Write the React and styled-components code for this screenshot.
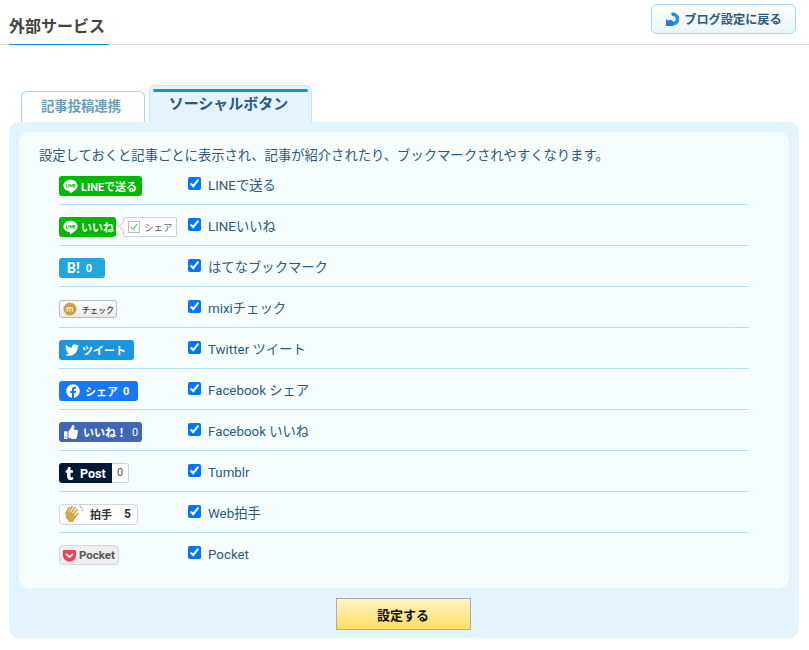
import React from "react";
import styled, { createGlobalStyle } from "styled-components";
import { FaTwitter, FaFacebook, FaThumbsUp, FaTumblr, FaGetPocket } from "react-icons/fa";
import { RiLineFill } from "react-icons/ri";

const FONT = `Roboto, "Noto Sans CJK JP", sans-serif`;

const GlobalStyle = createGlobalStyle`
  html, body {
    margin: 0;
    padding: 0;
    background: #fff;
    font-family: ${FONT};
  }
`;

const Page = styled.div`
  width: 809px;
  height: 650px;
  overflow: hidden;
`;

const Header = styled.header`
  height: 45px;
  box-sizing: border-box;
  padding: 4px 13px 0 9px;
  border-bottom: 1px solid #dcdfe2;
  display: flex;
  justify-content: space-between;
  align-items: flex-start;
`;

const Title = styled.h1`
  margin: 0;
  width: 100px;
  height: 41px;
  box-sizing: border-box;
  padding-top: 11px;
  border-bottom: 1px solid #1a8fd1;
  font-size: 16px;
  line-height: 24px;
  font-weight: 700;
  color: #444;
  white-space: nowrap;
`;

const BackButton = styled.button`
  width: 145px;
  height: 30px;
  box-sizing: border-box;
  padding: 0;
  display: flex;
  align-items: center;
  justify-content: center;
  gap: 3px;
  border: 1px solid #a8d4ec;
  border-radius: 6px;
  background: linear-gradient(#fff, #e8f6ff);
  color: #2c5a7c;
  font-family: ${FONT};
  font-size: 12.2px;
  font-weight: 700;
`;

const Tabs = styled.div`
  display: flex;
  align-items: flex-end;
  gap: 4px;
  height: 77px;
  padding-left: 21px;
`;

const Tab = styled.div`
  box-sizing: border-box;
  width: ${(p) => (p.$active ? "163px" : "124px")};
  height: ${(p) => (p.$active ? "37px" : "31px")};
  padding: ${(p) => (p.$active ? "4px" : "5px")} 4px 0 0;
  border: 1px solid ${(p) => (p.$active ? "#c5e5f7" : "#a8d4ec")};
  border-bottom: none;
  border-radius: 6px 6px 0 0;
  background: ${(p) => (p.$active ? "#e3f4ff" : "#fff")};
  color: ${(p) => (p.$active ? "#2c5a7c" : "#6d9ab8")};
  font-size: ${(p) => (p.$active ? "15px" : "13.33px")};
  line-height: ${(p) => (p.$active ? "21px" : "20px")};
  font-weight: 700;
  text-align: center;
  &::before {
    content: "";
    display: ${(p) => (p.$active ? "block" : "none")};
    height: 3px;
    margin: -1px -1px 2px 3px;
    border-radius: 2px;
    background: #1a8fd1;
  }
`;

const Panel = styled.section`
  margin: 0 10px 0 9px;
  height: 516px;
  box-sizing: border-box;
  padding: 10px;
  border-radius: 10px;
  background: #e3f4ff;
`;

const Inner = styled.div`
  height: 456px;
  box-sizing: border-box;
  padding: 15px 40px 0 20px;
  border-radius: 10px;
  background: #f6fdff;
  color: #2c5a7c;
`;

const Lead = styled.p`
  margin: 0;
  height: 17px;
  font-size: 13.33px;
  line-height: 18px;
  letter-spacing: -0.02px;
  white-space: nowrap;
`;

const List = styled.ul`
  margin: 0;
  padding: 0 0 0 20px;
  list-style: none;
`;

const Row = styled.li`
  display: flex;
  align-items: center;
  height: 41px;
  box-sizing: border-box;
  padding-top: 4px;
  border-bottom: 1px solid #b8def3;
  &:last-child {
    border-bottom-color: transparent;
  }
`;

const BadgeCell = styled.div`
  width: 129px;
  flex: none;
  display: flex;
  align-items: center;
`;

const Check = styled.label`
  display: flex;
  align-items: center;
  gap: 7px;
  font-size: 13.33px;
  line-height: 18px;
  cursor: pointer;
  input {
    width: 13px;
    height: 13px;
    margin: 0;
    position: relative;
    top: -3px;
  }
`;

const Badge = styled.span`
  display: inline-flex;
  align-items: center;
  box-sizing: border-box;
  width: ${(p) => p.$w}px;
  height: ${(p) => p.$h || 20}px;
  padding-left: ${(p) => p.$pad ?? 4}px;
  gap: ${(p) => p.$gap ?? 3}px;
  border-radius: ${(p) => p.$radius || 3}px;
  border: ${(p) => (p.$line ? `1px solid ${p.$line}` : "none")};
  background: ${(p) => p.$bg};
  color: ${(p) => p.$fg || "#fff"};
  font-size: ${(p) => p.$size || 11}px;
  font-weight: ${(p) => p.$weight || 700};
  white-space: nowrap;
  overflow: hidden;
  svg {
    flex: none;
  }
`;

const ShareBubble = styled.span`
  position: relative;
  display: inline-flex;
  align-items: center;
  gap: 4px;
  box-sizing: border-box;
  width: 54px;
  height: 20px;
  margin-left: 7px;
  padding-left: 4px;
  border: 1px solid #ccd0d4;
  border-radius: 2px;
  background: #fff;
  color: #666;
  font-size: 9.5px;
  &::before {
    content: "";
    position: absolute;
    left: -4px;
    top: 5px;
    width: 6px;
    height: 6px;
    background: #fff;
    border-left: 1px solid #ccd0d4;
    border-bottom: 1px solid #ccd0d4;
    transform: rotate(45deg);
  }
`;

const ShareBox = styled.span`
  display: flex;
  align-items: center;
  justify-content: center;
  width: 10px;
  height: 10px;
  border: 1px solid #bbb;
  color: #2fb52f;
  svg {
    display: block;
  }
`;

const Count = styled.span`
  font-weight: ${(p) => p.$weight || 700};
  font-size: ${(p) => p.$size || 11}px;
  margin-left: ${(p) => p.$ml || 0}px;
`;

const TumblrLabel = styled.span`
  display: inline-flex;
  align-items: center;
  gap: 4px;
  width: 53px;
  height: 100%;
  flex: none;
  padding-left: 4px;
  box-sizing: border-box;
  background: #001935;
  color: #fff;
  font-size: 12.5px;
`;

const TumblrCount = styled.span`
  flex: 1;
  text-align: center;
  color: #555;
  font-weight: 400;
  font-size: 11px;
  border: 1px solid #ccd0d4;
  border-left: none;
  border-radius: 0 3px 3px 0;
  height: 100%;
  box-sizing: border-box;
  line-height: 18px;
`;

const Footer = styled.div`
  display: flex;
  justify-content: center;
  padding: 10px 2px 0 0;
`;

const Submit = styled.button`
  width: 135px;
  height: 32px;
  border: 1px solid #aaa;
  padding: 0;
  background: linear-gradient(#fff3c8, #ffdf60);
  color: #111;
  font-family: ${FONT};
  font-size: 13px;
  font-weight: 700;
`;

const ReturnIcon = () => (
  <svg width="16" height="16" viewBox="0 0 16 16">
    <path
      d="M6.500 3.500A4.750 4.750 0 1 1 7 12.750"
      fill="none"
      stroke="#1d92d6"
      strokeWidth="3.400"
    />
    <path d="M1 8l2.200 1.600 2.600-.8 2.200 1.200V15H1z" fill="#1a7fe0" />
  </svg>
);

const ClapIcon = () => (
  <svg width="21" height="20" viewBox="0 0 21 20">
    <g fill="none" stroke="#d4a74f" strokeWidth="1.800" strokeLinecap="round">
      <path d="M2 9.500L5 3.500" />
      <path d="M4.500 9L8 2.500" />
      <path d="M7 9.500L11 3.500" />
      <path d="M9 11L13 6" />
      <path d="M11 13L14 9.500" />
    </g>
    <path d="M1.500 9l3-1.500 5.500 2.500 1.500 3.500-2.500 4.500H5.500l-3.500-4z" fill="#d4a74f" />
    <g stroke="#999" strokeWidth="0.800" strokeLinecap="round">
      <path d="M16 1.500l.7 2" />
      <path d="M18.500 3.500l-1 1" />
      <path d="M19 6.500l-1.500-.2" />
    </g>
  </svg>
);

const MixiIcon = () => (
  <svg width="14" height="14" viewBox="0 0 14 14">
    <circle cx="7" cy="7" r="6.500" fill="#d1a045" />
    <path
      d="M3.600 9.500V5.200h1v.5c.6-.8 1.700-.8 2.300 0 .7-.9 2.500-.9 2.900.4.100.5.100 2.300.1 3.400h-1V6.800c0-1.200-1.600-1.200-1.600 0v2.700h-.9V6.800c0-1.200-1.700-1.200-1.700 0v2.700z"
      fill="#fff"
    />
  </svg>
);

const rows = [
  {
    label: "LINEで送る",
    badge: (
      <Badge $w={83} $pad={3} $gap={2} $bg="#00b900">
        <RiLineFill size={17} />
        LINEで送る
      </Badge>
    ),
  },
  {
    label: "LINEいいね",
    badge: (
      <>
        <Badge $w={57} $pad={3} $gap={2} $bg="#00b900">
          <RiLineFill size={17} />
          いいね
        </Badge>
        <ShareBubble>
          <ShareBox>
            <svg width="8" height="8" viewBox="0 0 8 8">
              <path d="M1 4l2 2.500L7 1" fill="none" stroke="currentColor" />
            </svg>
          </ShareBox>
          シェア
        </ShareBubble>
      </>
    ),
  },
  {
    label: "はてなブックマーク",
    badge: (
      <Badge $w={46} $pad={8} $gap={6} $bg="#20a8dd" $size={14}>
        B!
        <Count>0</Count>
      </Badge>
    ),
  },
  {
    label: "mixiチェック",
    badge: (
      <Badge
        $w={58}
        $h={18}
        $pad={3}
        $gap={5}
        $bg="linear-gradient(#fff, #e8e8e8)"
        $line="#bbb"
        $fg="#333"
        $size={8}
        $weight={500}
      >
        <MixiIcon />
        チェック
      </Badge>
    ),
  },
  {
    label: "Twitter ツイート",
    badge: (
      <Badge $w={75} $pad={6} $gap={3} $bg="#1b95e0">
        <FaTwitter size={14} />
        ツイート
      </Badge>
    ),
  },
  {
    label: "Facebook シェア",
    badge: (
      <Badge $w={79} $pad={7} $gap={5} $bg="#1877f2">
        <FaFacebook size={14} />
        シェア
        <Count>0</Count>
      </Badge>
    ),
  },
  {
    label: "Facebook いいね",
    badge: (
      <Badge $w={83} $pad={5} $gap={5} $bg="#4267b2">
        <FaThumbsUp size={14} />
        いいね！
        <Count $weight={400}>0</Count>
      </Badge>
    ),
  },
  {
    label: "Tumblr",
    badge: (
      <Badge $w={70} $pad={0} $gap={0} $bg="#fff">
        <TumblrLabel>
          <FaTumblr size={13} />
          Post
        </TumblrLabel>
        <TumblrCount>0</TumblrCount>
      </Badge>
    ),
  },
  {
    label: "Web拍手",
    badge: (
      <Badge
        $w={79}
        $h={21}
        $pad={4}
        $gap={5}
        $radius={4}
        $bg="#fff"
        $line="#d5d5d5"
        $fg="#333"
        $size={11}
      >
        <ClapIcon />
        拍手
        <Count $ml={7} $size={12}>
          5
        </Count>
      </Badge>
    ),
  },
  {
    label: "Pocket",
    badge: (
      <Badge
        $w={60}
        $pad={2}
        $gap={2}
        $radius={4}
        $bg="#eeeeee"
        $line="#d8d8d8"
        $fg="#555"
        $size={11.5}
      >
        <FaGetPocket size={15} color="#ee4056" />
        Pocket
      </Badge>
    ),
  },
];

function App() {
  return (
    <Page>
      <GlobalStyle />
      <Header>
        <Title>外部サービス</Title>
        <BackButton>
          <ReturnIcon />
          ブログ設定に戻る
        </BackButton>
      </Header>
      <Tabs>
        <Tab>記事投稿連携</Tab>
        <Tab $active>ソーシャルボタン</Tab>
      </Tabs>
      <Panel>
        <Inner>
          <Lead>
            設定しておくと記事ごとに表示され、記事が紹介されたり、ブックマークされやすくなります。
          </Lead>
          <List>
            {rows.map((row) => (
              <Row key={row.label}>
                <BadgeCell>{row.badge}</BadgeCell>
                <Check>
                  <input type="checkbox" defaultChecked />
                  {row.label}
                </Check>
              </Row>
            ))}
          </List>
        </Inner>
        <Footer>
          <Submit>設定する</Submit>
        </Footer>
      </Panel>
    </Page>
  );
}

export default App;
